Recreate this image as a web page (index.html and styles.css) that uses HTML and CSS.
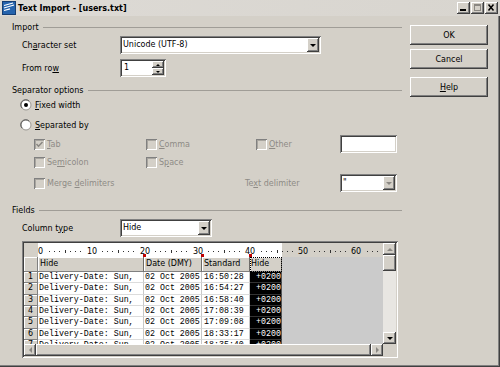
FILE: index.html
```html
<!DOCTYPE html>
<html lang="en">
<head>
<meta charset="utf-8">
<title>Text Import</title>
<link rel="stylesheet" href="styles.css">
</head>
<body>
<div class="dialog">
  <header class="titlebar">
    <svg class="appicon" viewBox="0 0 14 14" width="14" height="14">
      <rect x="0.5" y="0.5" width="13" height="13" fill="#2563ad" stroke="#163e73"/>
      <path d="M2 4.5 L11 2 M2 7 L12 4 M2 9.5 L8 7.8" stroke="#fff" stroke-width="1.2" fill="none"/>
    </svg>
    <span class="title">Text Import - [users.txt]</span>
    <div class="winbtns">
      <span class="winbtn raised"><svg viewBox="0 0 13 12" width="13" height="12"><rect x="3" y="7" width="6" height="2" fill="#000"/></svg></span>
      <span class="winbtn raised"><svg viewBox="0 0 13 12" width="13" height="12"><rect x="3.5" y="2.5" width="6" height="6" fill="none" stroke="#8a8782"/><rect x="3" y="2" width="7" height="2" fill="#8a8782"/></svg></span>
      <span class="winbtn raised"><svg viewBox="0 0 13 12" width="13" height="12"><path d="M3.5 2.5 L8.5 8.5 M8.5 2.5 L3.5 8.5" stroke="#000" stroke-width="1.5"/></svg></span>
    </div>
  </header>
  <div class="content">
    <main class="main">
      <div class="ghead g-import"><span>Import</span><i class="rule"></i></div>
      <div class="frow r-charset">
        <span class="lbl">Ch<u>a</u>racter set</span>
        <div class="combo sunken w-charset"><span class="cval">Unicode (UTF-8)</span><span class="ddbtn raised"><i class="arr-down"></i></span></div>
      </div>
      <div class="frow r-fromrow">
        <span class="lbl">From ro<u>w</u></span>
        <div class="spin sunken"><span class="cval">1</span><span class="spinbtns"><span class="sbtn raised"><i class="arr-up sm"></i></span><span class="sbtn raised"><i class="arr-down sm"></i></span></span></div>
      </div>

      <div class="ghead g-sep"><span>Separator options</span><i class="rule"></i></div>
      <div class="radio r-fixed">
        <svg class="rdo" viewBox="0 0 12 12" width="12" height="12"><circle cx="6" cy="6" r="5" fill="#fff" stroke="#9a9792"/><path d="M2.2 9.2 A4.6 4.6 0 0 1 9.2 2.2" fill="none" stroke="#555" stroke-width="1"/><circle cx="6" cy="6" r="2" fill="#000"/></svg>
        <span><u>F</u>ixed width</span>
      </div>
      <div class="radio r-sepby">
        <svg class="rdo" viewBox="0 0 12 12" width="12" height="12"><circle cx="6" cy="6" r="5" fill="#fff" stroke="#9a9792"/><path d="M2.2 9.2 A4.6 4.6 0 0 1 9.2 2.2" fill="none" stroke="#555" stroke-width="1"/></svg>
        <span><u>S</u>eparated by</span>
      </div>
      <div class="checks">
        <div class="chk"><span class="cbox"><svg viewBox="0 0 11 11" width="11" height="11"><path d="M2.5 5 L4.5 7.2 L8.5 3" fill="none" stroke="#8a8782" stroke-width="1.5"/></svg></span><span class="dis"><u>T</u>ab</span></div>
        <div class="chk"><span class="cbox"></span><span class="dis"><u>C</u>omma</span></div>
        <div class="chk"><span class="cbox"></span><span class="dis"><u>O</u>ther</span></div>
        <div class="otherinput sunken"></div>
        <div class="chk"><span class="cbox"></span><span class="dis">Se<u>m</u>icolon</span></div>
        <div class="chk"><span class="cbox"></span><span class="dis">S<u>p</u>ace</span></div>
      </div>
      <div class="mergerow">
        <div class="chk merge"><span class="cbox"></span><span class="dis">Merge <u>d</u>elimiters</span></div>
        <span class="dis tdlbl">Te<u>x</u>t delimiter</span>
        <div class="combo sunken w-tdelim"><span class="cval">"</span><span class="ddbtn raised"><i class="arr-down off"></i></span></div>
      </div>

      <div class="ghead g-fields"><span>Fields</span><i class="rule"></i></div>
      <div class="frow r-coltype">
        <span class="lbl">Column t<u>y</u>pe</span>
        <div class="combo sunken w-coltype"><span class="cval">Hide</span><span class="ddbtn raised"><i class="arr-down"></i></span></div>
      </div>

      <div class="preview">
        <div class="viewport">
          <div class="rulerrow">
            <span class="rn-blank"></span>
            <svg class="ruler" viewBox="0 0 345 14" width="345" height="14">
              <rect x="0" y="0" width="244" height="14" fill="#fff"/>
              <rect x="244" y="0" width="101" height="14" fill="#d4d0c8"/>
              <path fill="#333" d="M11 8h1v1h-1z M16 8h1v1h-1z M21 8h1v1h-1z M27 7h1v3h-1z M32 8h1v1h-1z M37 8h1v1h-1z M42 8h1v1h-1z
              M64 8h1v1h-1z M69 8h1v1h-1z M74 8h1v1h-1z M80 7h1v3h-1z M85 8h1v1h-1z M90 8h1v1h-1z M95 8h1v1h-1z
              M117 8h1v1h-1z M122 8h1v1h-1z M127 8h1v1h-1z M133 7h1v3h-1z M138 8h1v1h-1z M143 8h1v1h-1z M148 8h1v1h-1z
              M170 8h1v1h-1z M175 8h1v1h-1z M180 8h1v1h-1z M186 7h1v3h-1z M191 8h1v1h-1z M196 8h1v1h-1z M201 8h1v1h-1z
              M223 8h1v1h-1z M228 8h1v1h-1z M233 8h1v1h-1z M239 7h1v3h-1z M244 8h1v1h-1z M249 8h1v1h-1z M254 8h1v1h-1z
              M276 8h1v1h-1z M281 8h1v1h-1z M286 8h1v1h-1z M292 7h1v3h-1z M297 8h1v1h-1z M302 8h1v1h-1z M307 8h1v1h-1z
              M329 8h1v1h-1z M334 8h1v1h-1z M339 8h1v1h-1z"/>
              <g class="rlabels">
                <text x="0" y="11">0</text>
                <text x="54" y="11" text-anchor="middle">10</text>
                <text x="107" y="11" text-anchor="middle">20</text>
                <text x="160" y="11" text-anchor="middle">30</text>
                <text x="212" y="11" text-anchor="middle">40</text>
                <text x="265" y="11" text-anchor="middle">50</text>
                <text x="318" y="11" text-anchor="middle">60</text>
              </g>
              <rect x="105" y="11" width="3" height="3" fill="#c00000"/>
              <rect x="163" y="11" width="3" height="3" fill="#c00000"/>
              <rect x="211" y="11" width="3" height="3" fill="#c00000"/>
            </svg>
          </div>
          <div class="grid">
            <span class="rn hd"></span><span class="hc">Hide</span><span class="hc">Date (DMY)</span><span class="hc">Standard</span><span class="hc sel">Hide</span><span class="rest"></span>

            <span class="rn">1</span><span class="c">Delivery-Date: Sun,</span><span class="c">02 Oct 2005</span><span class="c c3">16:50:28</span><span class="c c4"> +0200</span><span class="rest"></span>
            <span class="rn">2</span><span class="c">Delivery-Date: Sun,</span><span class="c">02 Oct 2005</span><span class="c c3">16:54:27</span><span class="c c4"> +0200</span><span class="rest"></span>
            <span class="rn">3</span><span class="c">Delivery-Date: Sun,</span><span class="c">02 Oct 2005</span><span class="c c3">16:58:40</span><span class="c c4"> +0200</span><span class="rest"></span>
            <span class="rn">4</span><span class="c">Delivery-Date: Sun,</span><span class="c">02 Oct 2005</span><span class="c c3">17:08:39</span><span class="c c4"> +0200</span><span class="rest"></span>
            <span class="rn">5</span><span class="c">Delivery-Date: Sun,</span><span class="c">02 Oct 2005</span><span class="c c3">17:09:08</span><span class="c c4"> +0200</span><span class="rest"></span>
            <span class="rn">6</span><span class="c">Delivery-Date: Sun,</span><span class="c">02 Oct 2005</span><span class="c c3">18:33:17</span><span class="c c4"> +0200</span><span class="rest"></span>
            <span class="rn">7</span><span class="c">Delivery-Date: Sun,</span><span class="c">02 Oct 2005</span><span class="c c3">18:35:40</span><span class="c c4"> +0200</span><span class="rest"></span>
          </div>
        </div>
        <div class="vscroll">
          <span class="sb raised"><i class="arr-up off"></i></span>
          <span class="thumb raised"></span>
          <span class="track"></span>
          <span class="sb raised"><i class="arr-down"></i></span>
        </div>
        <div class="hscroll">
          <span class="sb raised"><i class="arr-left off"></i></span>
          <span class="htrack raised"></span>
          <span class="sb raised"><i class="arr-right off"></i></span>
        </div>
        <div class="corner"></div>
      </div>
    </main>
    <aside class="side">
      <button class="btn raised b-ok">OK</button>
      <button class="btn raised b-cancel">Cancel</button>
      <button class="btn raised b-help"><u>H</u>elp</button>
    </aside>
  </div>
</div>
</body>
</html>
```

FILE: styles.css
```css
* { box-sizing: border-box; }
html, body { margin: 0; padding: 0; }
body {
  width: 500px; height: 367px; overflow: hidden;
  background: #d4d0c8;
  font-family: "DejaVu Sans", "Liberation Sans", sans-serif;
  font-size: 8px; color: #000;
}
u { text-decoration: underline; text-underline-offset: 1px; }

.dialog {
  width: 500px; height: 367px;
  display: flex; flex-direction: column;
  box-shadow: inset -1px -1px 0 #404040, inset -2px -2px 0 #808080;
}

.raised {
  background: #d4d0c8;
  box-shadow: inset -1px -1px 0 #404040, inset 1px 1px 0 #fff, inset -2px -2px 0 #808080;
}
.sunken {
  background: #fff;
  box-shadow: inset 1px 1px 0 #808080, inset -1px -1px 0 #fff, inset 2px 2px 0 #404040, inset -2px -2px 0 #d4d0c8;
}

/* title bar */
.titlebar {
  height: 16px; flex: none;
  display: flex; align-items: center;
  padding-left: 2px;
  background: linear-gradient(to right, #dddad5, #d8d5cf);
}
.appicon { display: block; }
.title { font-weight: bold; margin-left: 2px; }
.winbtns { margin-left: auto; margin-right: 2px; display: flex; gap: 1px; }
.winbtn { width: 13px; height: 12px; display: block; }
.winbtn svg { display: block; }

/* content */
.content { flex: 1; display: flex; }
.main { width: 402px; display: flex; flex-direction: column; }
.side { width: 78px; margin-left: 8px; padding-top: 9px; display: flex; flex-direction: column; }

.ghead { height: 10px; display: flex; align-items: center; padding-left: 12px; }
.ghead .rule { flex: 1; border-top: 1px solid #a09d97; margin-left: 4px; height: 0; }

.frow { height: 18px; display: flex; align-items: center; padding-left: 22px; }
.lbl { width: 98px; }

.combo { height: 18px; display: flex; align-items: center; padding: 2px; }
.cval { flex: 1; padding-left: 1px; line-height: 14px; white-space: pre; }
.ddbtn { width: 12px; height: 14px; display: flex; align-items: center; justify-content: center; }
.w-charset { width: 201px; }
.w-coltype { width: 92px; }
.w-tdelim { width: 57px; }

.spin { width: 46px; height: 18px; display: flex; align-items: center; padding: 2px; }
.spin .cval { padding-left: 2px; }
.spinbtns { width: 12px; height: 14px; display: flex; flex-direction: column; }
.sbtn { flex: 1; display: flex; align-items: center; justify-content: center; }

.arr-down, .arr-up, .arr-left, .arr-right { display: block; width: 0; height: 0; }
.arr-down { border-left: 3px solid transparent; border-right: 3px solid transparent; border-top: 3px solid #000; }
.arr-up { border-left: 3px solid transparent; border-right: 3px solid transparent; border-bottom: 3px solid #000; }
.arr-left { border-top: 3px solid transparent; border-bottom: 3px solid transparent; border-right: 3px solid #000; }
.arr-right { border-top: 3px solid transparent; border-bottom: 3px solid transparent; border-left: 3px solid #000; }
.arr-down.sm { border-width: 2px 2px 0 2px; }
.arr-up.sm { border-width: 0 2px 2px 2px; }
.arr-down.off { border-top-color: #8a8782; }
.arr-up.off { border-bottom-color: #8a8782; }
.arr-left.off { border-right-color: #8a8782; }
.arr-right.off { border-left-color: #8a8782; }

.radio { height: 14px; display: flex; align-items: center; padding-left: 20px; gap: 3px; }
.rdo { display: block; }

.checks {
  display: grid; padding-left: 34px;
  grid-template-columns: 112px 110px 84px 57px;
  grid-template-rows: 18px 14px; row-gap: 2px;
  align-items: center;
}
.chk { display: flex; align-items: center; gap: 2px; }
.cbox {
  width: 11px; height: 11px; display: block;
  background: #d4d0c8;
  box-shadow: inset 1px 1px 0 #808080, inset -1px -1px 0 #fff, inset 2px 2px 0 #a8a59f;
}
.cbox svg { display: block; }
.dis { color: #8e8b86; }
.otherinput { height: 18px; }

.mergerow { height: 18px; display: flex; align-items: center; padding-left: 34px; }
.merge { width: 211px; }
.tdlbl { width: 95px; }

.g-import { margin-top: 6px; }
.r-charset { margin-top: 4px; }
.r-fromrow { margin-top: 5px; }
.g-sep { margin-top: 8px; }
.r-fixed { margin-top: 3px; }
.r-sepby { margin-top: 6px; }
.checks { margin-top: 3px; }
.mergerow { margin-top: 5px; }
.g-fields { margin-top: 13px; }
.r-coltype { margin-top: 4px; }

/* preview */
.preview {
  margin-top: 4px; margin-left: 22px;
  width: 376px; height: 117px;
  padding: 2px;
  display: grid;
  grid-template-columns: 359px 13px;
  grid-template-rows: 101px 12px;
  background: #d4d0c8;
  box-shadow: inset 1px 1px 0 #808080, inset -1px -1px 0 #fff, inset 2px 2px 0 #404040, inset -2px -2px 0 #d4d0c8;
}
.viewport { overflow: hidden; display: flex; flex-direction: column; background: #cbcbcb; }
.rulerrow { height: 14px; flex: none; display: flex; }
.rn-blank { width: 14px; background: #d4d0c8; }
.ruler { display: block; }
.rlabels text { font-family: "DejaVu Sans", sans-serif; font-size: 8px; fill: #000; }

.grid {
  display: grid;
  grid-template-columns: 14px 106px 58px 48px 32px 1fr;
  grid-template-rows: 15px;
  grid-auto-rows: 11.33px;
}
.rn {
  background: #d4d0c8;
  border-right: 1px solid #808080; border-bottom: 1px solid #808080;
  box-shadow: inset 1px 1px 0 #fff;
  text-align: center; line-height: 10px;
}
.rn.hd { line-height: 14px; }
.hc {
  background: #d4d0c8;
  border-right: 1px solid #6e6c68; border-bottom: 1px solid #808080;
  box-shadow: inset 1px 1px 0 #fff;
  padding-left: 2px; line-height: 14px;
  white-space: nowrap; overflow: hidden;
}
.hc.sel { outline: 1px dotted #000; outline-offset: -1px; padding-left: 1px; }
.c {
  background: #fff;
  border-right: 1px solid #c8c8c8; border-bottom: 1px solid #dcdcdc;
  font-family: "Liberation Mono", "DejaVu Sans Mono", monospace;
  font-size: 8.3px; line-height: 10.5px;
  padding-left: 1px;
  white-space: pre; overflow: hidden;
}
.c3 { padding-left: 2px; }
.c4 { background: #000; color: #fff; border-bottom-color: #333; border-right-color: #555; padding-left: 1px; }
.rest { background: #cbcbcb; }

.vscroll { display: flex; flex-direction: column; }
.sb { width: 13px; height: 12px; flex: none; display: flex; align-items: center; justify-content: center; }
.thumb { height: 16px; flex: none; }
.track { flex: 1; background: #e8e6e2; }
.hscroll { display: flex; }
.hscroll .sb { width: 12px; }
.htrack { flex: 1; }
.corner { background: #d4d0c8; }

/* side buttons */
.btn {
  width: 78px; height: 20px;
  border: 0; padding: 0; margin: 0;
  font-family: "DejaVu Sans", "Liberation Sans", sans-serif;
  font-size: 8px; color: #000;
  text-align: center;
}
.b-cancel { margin-top: 4px; }
.b-help { margin-top: 8px; }
```
